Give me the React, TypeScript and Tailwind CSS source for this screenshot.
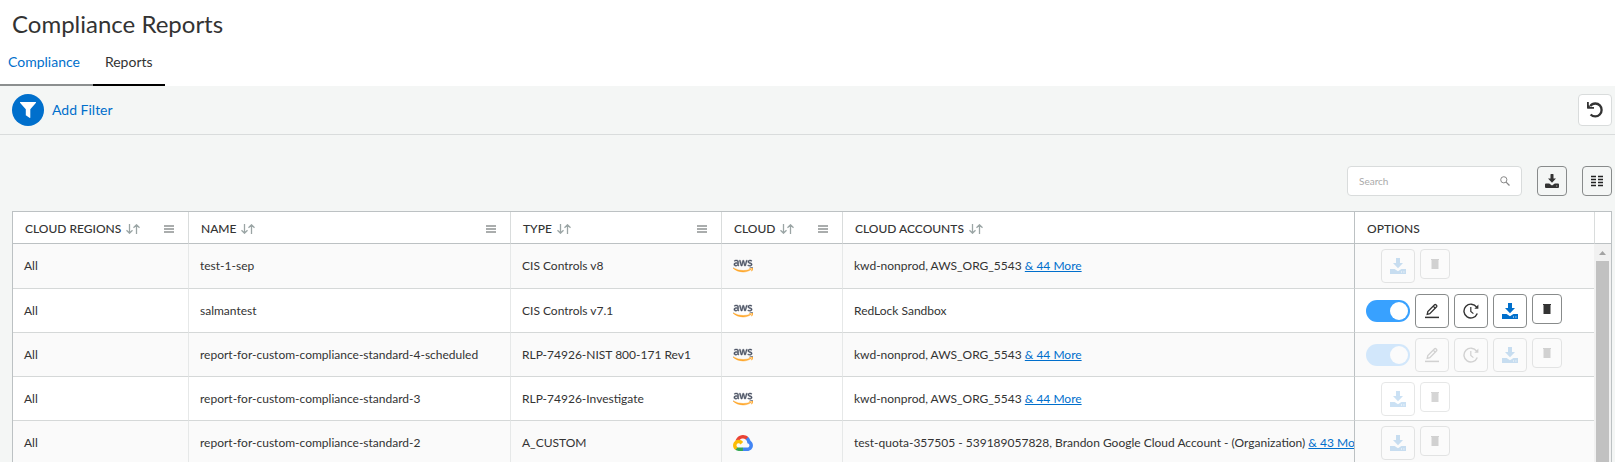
import React, { useState } from "react";
import { FaAws } from "react-icons/fa";

type Cloud = "aws" | "gcp";

interface Report {
  region: string;
  name: string;
  type: string;
  cloud: Cloud;
  accounts: string;
  more?: string;
  scheduled?: boolean;
  disabled?: boolean;
}

const reports: Report[] = [
  { region: "All", name: "test-1-sep", type: "CIS Controls v8", cloud: "aws", accounts: "kwd-nonprod, AWS_ORG_5543", more: "& 44 More", disabled: true },
  { region: "All", name: "salmantest", type: "CIS Controls v7.1", cloud: "aws", accounts: "RedLock Sandbox", scheduled: true },
  { region: "All", name: "report-for-custom-compliance-standard-4-scheduled", type: "RLP-74926-NIST 800-171 Rev1", cloud: "aws", accounts: "kwd-nonprod, AWS_ORG_5543", more: "& 44 More", scheduled: true, disabled: true },
  { region: "All", name: "report-for-custom-compliance-standard-3", type: "RLP-74926-Investigate", cloud: "aws", accounts: "kwd-nonprod, AWS_ORG_5543", more: "& 44 More", disabled: true },
  { region: "All", name: "report-for-custom-compliance-standard-2", type: "A_CUSTOM", cloud: "gcp", accounts: "test-quota-357505 - 539189057828, Brandon Google Cloud Account - (Organization)", more: "& 43 More", disabled: true },
];

const columns = [
  { label: "CLOUD REGIONS", menu: true },
  { label: "NAME", menu: true },
  { label: "TYPE", menu: true },
  { label: "CLOUD", menu: true },
  { label: "CLOUD ACCOUNTS", menu: false },
];

function SortIcon() {
  return (
    <svg width="14" height="10" viewBox="0 0 14 10" fill="none" stroke="#9ba5a5" strokeWidth="1.3" aria-hidden="true">
      <path d="M3.5 0V9.2M0.5 6.2L3.5 9.2L6.5 6.2M10.5 10V0.8M7.5 3.8L10.5 0.8L13.5 3.8" />
    </svg>
  );
}

function MenuIcon() {
  return (
    <svg width="10" height="8" viewBox="0 0 10 8" fill="#aaadad" aria-hidden="true">
      <path d="M0 0h10v2H0zM0 3h10v2H0zM0 6h10v2H0z" />
    </svg>
  );
}

function FunnelIcon() {
  return (
    <svg width="16" height="16" viewBox="0 0 16 16" fill="#fff" aria-hidden="true">
      <path d="M0.3 0H15.7C16.1 0 16.1 0.7 15.8 1.1L10.3 7.3V15.4C10.3 15.9 9.8 16 9.4 15.8L6.2 13.6C5.9 13.4 5.8 13.2 5.8 12.9V7.3L0.2 1.1C-0.1 0.7-0.1 0 0.3 0Z" />
    </svg>
  );
}

function UndoIcon() {
  return (
    <svg width="16" height="16" viewBox="0 0 16 16" aria-hidden="true">
      <path d="M3.2 4.2C4.5 2.4 6.3 1.5 8.3 1.5C12 1.5 14.6 4.4 14.6 7.9C14.6 11.6 11.8 14.4 8.3 14.4C6.4 14.4 4.8 13.7 3.6 12.5" fill="none" stroke="#333" strokeWidth="2.3" />
      <path d="M0 0H1.8V3.2L3.4 4.9H7V6.7H0.6C0.2 6.7 0 6.5 0 6.1Z" fill="#333" />
    </svg>
  );
}

function DownloadIcon() {
  return (
    <svg width="16" height="16" viewBox="0 0 16 16" fill="currentColor" aria-hidden="true">
      <path d="M6 0H10V5H13L8 10.2L3 5H6Z" />
      <path fillRule="evenodd" d="M0 11H4.6L8 13.2L11.4 11H16V16H0ZM11 13.6V14.6H12V13.6ZM13.4 13.6V14.6H14.4V13.6Z" />
    </svg>
  );
}

function TableDownloadIcon() {
  return (
    <svg width="14" height="14" viewBox="0 0 14 14" fill="#333" aria-hidden="true">
      <path d="M5.5 0.5Q5.5 0 6 0H8Q8.5 0 8.5 0.5V4.4H11L7 8.8L3 4.4H5.5Z" />
      <path fillRule="evenodd" d="M1 9.6H4.2L7 11.6L9.8 9.6H13Q14 9.6 14 10.6V13Q14 14 13 14H1Q0 14 0 13V10.6Q0 9.6 1 9.6ZM11.4 11.6V12.4H12.2V11.6Z" />
    </svg>
  );
}

function ColumnsIcon() {
  return (
    <svg width="12" height="12" viewBox="0 0 12 12" aria-hidden="true">
      <path d="M0 0h5v12H0zM7 0h5v12H7z" fill="#bfc1c1" />
      <path d="M0 1h5v1H0zM7 1h5v1H7zM0 4h5v1H0zM7 4h5v1H7zM0 7h5v1H0zM7 7h5v1H7zM0 10h5v1H0zM7 10h5v1H7z" fill="#222" />
    </svg>
  );
}

function SearchIcon() {
  return (
    <svg width="10" height="10" viewBox="0 0 10 10" fill="none" stroke="#888" aria-hidden="true">
      <circle cx="3.8" cy="3.8" r="3.1" strokeWidth="1" />
      <path d="M6.1 6.1L9.5 9.5" strokeWidth="1.3" />
    </svg>
  );
}

function PencilIcon() {
  return (
    <svg width="16" height="16" viewBox="0 0 16 16" fill="none" stroke="#333" strokeWidth="1.3" aria-hidden="true">
      <path d="M3.2 11.3L3.8 8.6L10.6 1.8C11 1.4 11.5 1.4 11.9 1.8L12.6 2.5C13 2.9 13 3.4 12.6 3.8L5.8 10.6Z" />
      <path d="M9.3 3.2L11.2 5.1" />
      <path d="M1 14.4H15" strokeWidth="1.5" />
    </svg>
  );
}

function HistoryIcon() {
  return (
    <svg width="16" height="16" viewBox="0 0 16 16" fill="none" stroke="#333" strokeWidth="1.4" aria-hidden="true">
      <path d="M13.6 4.2A6.9 6.9 0 1 0 14.3 10.6" />
      <path d="M7.8 4V8.4L10.4 10.6" strokeWidth="1.2" />
      <path d="M15.4 1.6V5.8H11.4Z" fill="#333" stroke="none" />
    </svg>
  );
}

function TrashIcon() {
  return (
    <svg width="8" height="10" viewBox="0 0 8 10" fill="#333" aria-hidden="true">
      <path d="M0 0H8V1H0ZM0.5 1H7.5V10H0.5Z" />
    </svg>
  );
}

function GoogleCloudLogo() {
  return (
    <svg width="20" height="16" viewBox="0 0 256 206" role="img" aria-label="Google Cloud">
      <path fill="#EA4335" d="M170.25 56.82L192.5 34.57L193.99 25.2C153.44-11.68 88.98-7.5 52.42 33.92C42.27 45.42 34.73 59.76 30.72 74.57L38.69 73.45L83.19 66.11L86.63 62.6C106.42 40.85 139.9 37.93 162.76 56.43Z" />
      <path fill="#4285F4" d="M224.2 73.92C219.09 55.08 208.59 38.15 193.99 25.2L162.76 56.43C175.94 67.2 183.46 83.44 183.13 100.47V106.01C198.49 106.01 210.93 118.45 210.93 133.81C210.93 149.16 198.49 161.29 183.13 161.29H127.46L122 167.22V200.56L127.46 205.8H183.13C223.06 206.11 255.69 174.3 256 134.37C256.19 110.17 244.25 87.48 224.2 73.92" />
      <path fill="#34A853" d="M71.87 205.8H127.46V161.29H71.87C67.91 161.29 64.07 160.44 60.47 158.79L52.58 161.21L30.18 183.46L28.22 191.04C40.79 200.53 56.12 205.86 71.87 205.8" />
      <path fill="#FBBC05" d="M71.87 61.43C31.94 61.66-.24 94.23 0 134.16C.13 156.46 10.55 177.45 28.22 191.04L60.47 158.79C46.48 152.47 40.26 136.01 46.58 122.02C52.9 108.03 69.37 101.81 83.36 108.13C89.52 110.91 94.46 115.85 97.25 122.02L129.49 89.77C115.77 71.83 94.45 61.34 71.87 61.43" />
    </svg>
  );
}

function CloudLogo({ cloud }: { cloud: Cloud }) {
  return cloud === "aws" ? (
    <FaAws className="h-4 w-5" fill="url(#aws-colors)" stroke="url(#aws-colors)" strokeWidth="14" role="img" aria-label="AWS" />
  ) : (
    <GoogleCloudLogo />
  );
}

function IconButton({ label, small, disabled, children }: { label: string; small?: boolean; disabled?: boolean; children: React.ReactNode }) {
  return (
    <button
      type="button"
      aria-label={label}
      disabled={disabled}
      className={`flex items-center justify-center rounded border border-[#888b8b] bg-white disabled:opacity-20 ${small ? "size-[30px]" : "size-[34px]"}`}
    >
      {children}
    </button>
  );
}

function Toggle({ label, disabled }: { label: string; disabled?: boolean }) {
  const [on, setOn] = useState(true);
  return (
    <label className={`mt-1.5 flex h-[22px] w-11 items-center rounded-full px-0.5 ${on ? "justify-end bg-[#38a1ff]" : "justify-start bg-[#bbb]"} ${disabled ? "opacity-20" : ""}`}>
      <input type="checkbox" aria-label={label} checked={on} disabled={disabled} onChange={() => setOn(!on)} className="sr-only" />
      <span className="size-[18px] rounded-full bg-white" />
    </label>
  );
}

function ReportOptions({ report }: { report: Report }) {
  const { scheduled, disabled, name } = report;
  return (
    <div className={`flex items-start gap-[5px] pt-[5px] ${scheduled ? "pl-[11px]" : "pl-[26px]"}`}>
      {scheduled && (
        <>
          <Toggle label={`Schedule ${name}`} disabled={disabled} />
          <IconButton label={`Edit ${name}`} disabled={disabled}><PencilIcon /></IconButton>
          <IconButton label={`History of ${name}`} disabled={disabled}><HistoryIcon /></IconButton>
        </>
      )}
      <IconButton label={`Download ${name}`} disabled={disabled}>
        <span className="text-[#006fcc]"><DownloadIcon /></span>
      </IconButton>
      <IconButton label={`Delete ${name}`} small disabled={disabled}><TrashIcon /></IconButton>
    </div>
  );
}

export default function App() {
  return (
    <div className="flex h-screen flex-col overflow-hidden bg-[#f4f6f5] font-['Lato',sans-serif] text-[#333]">
      <svg className="absolute size-0" aria-hidden="true">
        <defs>
          <linearGradient id="aws-colors" x1="0" y1="0" x2="0" y2="1">
            <stop offset="0.66" stopColor="#4a5263" />
            <stop offset="0.66" stopColor="#ffa526" />
          </linearGradient>
        </defs>
      </svg>

      <header className="shrink-0 bg-white">
        <h1 className="px-3 pt-2 text-2xl leading-8">Compliance Reports</h1>
        <nav className="flex pt-2 text-sm" aria-label="Compliance views">
          <a href="#compliance" className="h-[38px] border-b-2 border-[#8c8f8f] pt-1 pr-[13px] pl-2 text-[#006fcc]">Compliance</a>
          <a href="#reports" aria-current="page" className="h-[38px] border-b-2 border-black px-3 pt-1">Reports</a>
        </nav>
      </header>

      <div className="flex h-[49px] shrink-0 items-center justify-between border-b border-[#d9dcdc] pr-[3px] pl-3">
        <button type="button" className="flex items-center gap-2 text-sm text-[#006fcc]">
          <span className="flex size-8 items-center justify-center rounded-full bg-[#006fcc]"><FunnelIcon /></span>
          Add Filter
        </button>
        <button type="button" aria-label="Reset filters" className="flex h-8 w-[34px] items-center justify-center rounded border border-[#d9dcdc] bg-white">
          <UndoIcon />
        </button>
      </div>

      <div className="flex shrink-0 justify-end gap-[15px] pt-[31px] pr-[3px] pb-[15px]">
        <label className="flex h-[30px] w-[175px] items-center rounded border border-[#d9dcdc] bg-white pr-[11px] pl-[11px]">
          <input type="search" aria-label="Search" placeholder="Search" className="min-w-0 flex-1 text-[10px] outline-none placeholder:text-[#aaa]" />
          <SearchIcon />
        </label>
        <button type="button" aria-label="Download table" className="flex size-[30px] items-center justify-center rounded border border-[#888b8b]">
          <TableDownloadIcon />
        </button>
        <button type="button" aria-label="Choose columns" className="flex size-[30px] items-center justify-center rounded border border-[#888b8b]">
          <ColumnsIcon />
        </button>
      </div>

      <div className="mr-[3px] ml-3 min-h-0 flex-1 overflow-hidden border border-b-0 border-[#bcc1c3] bg-white">
        <table className="w-full table-fixed border-separate border-spacing-0 text-left text-xs">
          <colgroup>
            <col className="w-[176px]" />
            <col className="w-[322px]" />
            <col className="w-[211px]" />
            <col className="w-[121px]" />
            <col />
            <col className="w-[239px]" />
            <col className="w-[17px]" />
          </colgroup>
          <thead>
            <tr className="h-8">
              {columns.map((c, i) => (
                <th key={c.label} scope="col" className={`border-r border-b border-b-[#bcc1c3] p-0 pt-0.5 pr-3.5 pl-3 font-medium ${i === 4 ? "border-r-[#bcc1c3]" : "border-r-[#d9dcdc]"}`}>
                  <div className="flex items-center gap-[5px]">
                    {c.label}
                    <button type="button" aria-label={`Sort by ${c.label}`}><SortIcon /></button>
                    {c.menu && <button type="button" aria-label={`${c.label} menu`} className="ml-auto"><MenuIcon /></button>}
                  </div>
                </th>
              ))}
              <th scope="col" className="border-b border-[#bcc1c3] p-0 pt-0.5 pl-3 font-medium">OPTIONS</th>
              <td className="border-b border-l border-b-[#bcc1c3] border-l-[#d9dcdc] p-0" />
            </tr>
          </thead>
          <tbody>
            {reports.map((r, i) => (
              <tr key={r.name} className="h-11 odd:bg-[#fafafa] first:h-[45px] *:border-b *:border-b-[#d5d8d8]">
                <td className="border-r border-r-[#e6e8e8] p-0 pl-[11px]">{r.region}</td>
                <td className="border-r border-r-[#e6e8e8] p-0 pl-[11px]">{r.name}</td>
                <td className="border-r border-r-[#e6e8e8] p-0 pl-[11px]">{r.type}</td>
                <td className="border-r border-r-[#e6e8e8] p-0 pl-[11px]"><CloudLogo cloud={r.cloud} /></td>
                <td className="overflow-hidden border-r border-r-[#bcc1c3] p-0 pl-[11px] whitespace-nowrap">
                  {r.accounts}
                  {r.more && <> <a href="#accounts" className="text-[#006fcc] underline">{r.more}</a></>}
                </td>
                <td className="p-0 align-top"><ReportOptions report={r} /></td>
                {i === 0 && (
                  <td rowSpan={reports.length} className="bg-[#f1f1f1] p-0 pr-0.5 pl-0.5 align-top">
                    <div className="flex h-[17px] items-center justify-center">
                      <svg width="7" height="4" viewBox="0 0 7 4" fill="#a3a3a3" aria-hidden="true"><path d="M3.5 0L7 4H0Z" /></svg>
                    </div>
                    <div className="h-[203px] bg-[#c1c1c1]" />
                  </td>
                )}
              </tr>
            ))}
          </tbody>
        </table>
      </div>
    </div>
  );
}
